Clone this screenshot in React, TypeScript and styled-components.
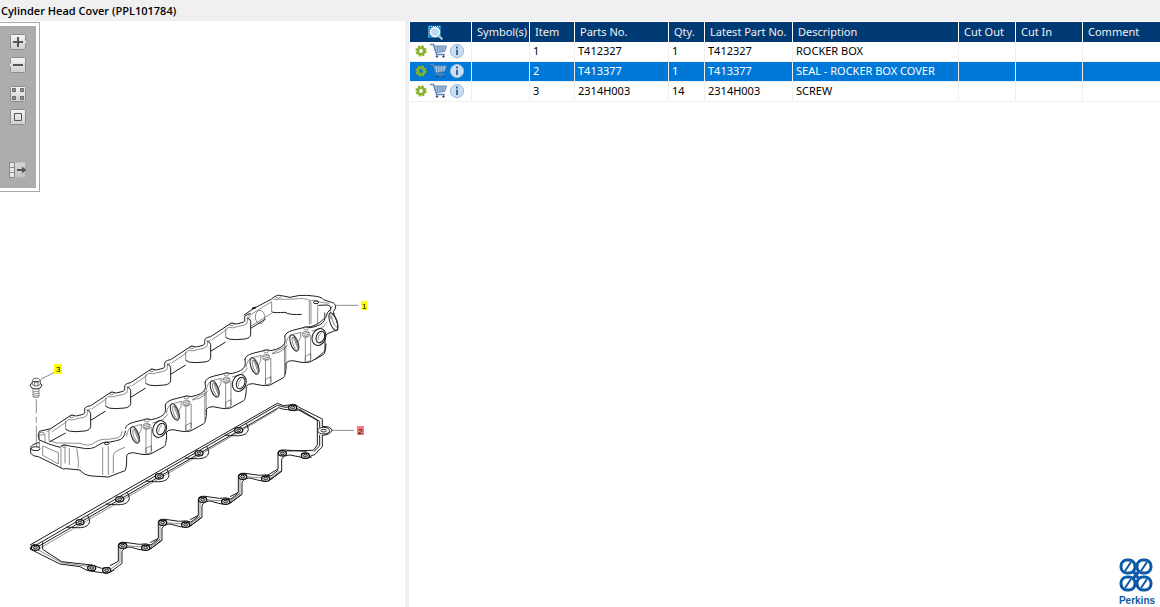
import React from 'react';
import styled, { createGlobalStyle } from 'styled-components';

const Global = createGlobalStyle`
  * { box-sizing: border-box; }
  body { margin: 0; background: #fff; color: #000; font: 11px/17px "Noto Sans", "Open Sans", sans-serif; }
`;

const Page = styled.div`
  min-height: 100vh;
  display: flex;
  flex-direction: column;
`;

const TitleBar = styled.header`
  background: #f0f0f0;
  padding: 1px 1px 0;
`;

const Title = styled.h1`
  margin: 0;
  font-size: 11px;
  line-height: 20px;
  font-weight: 600;
  font-family: "Open Sans", "Noto Sans", sans-serif;
`;

const Main = styled.main`
  flex: 1;
  display: flex;
`;

const DrawingPane = styled.section`
  flex: 0 0 calc(35% - 1px);
  padding-top: 1px;
`;

const Splitter = styled.div`
  flex: none;
  width: 4px;
  background: #f0f0f0;
`;

const PartsPane = styled.section`
  flex: 1;
  min-width: 0;
  padding-left: 1px;
  display: flex;
  flex-direction: column;
  justify-content: space-between;
`;

const Toolbar = styled.div`
  width: 40px;
  padding: 3px 3px 3px 0;
  border: 1px solid #aaa;
  border-left: 0;
`;

const ToolList = styled.div`
  display: flex;
  flex-direction: column;
  align-items: center;
  gap: 5px;
  padding: 7px 0 9px;
  background: #acacac;
`;

const ToolButton = styled.button<{ $gap?: number }>`
  display: block;
  width: 20px;
  height: 18px;
  margin: ${(p) => p.$gap ?? 0}px 0 0;
  padding: 0;
  border: 0;
  background: none;
  svg { display: block; }
`;

const Drawing = styled.svg`
  display: block;
  width: 100%;
  height: auto;
  .thin { stroke: #555; stroke-width: 2; }
`;

const Table = styled.table`
  width: 100%;
  margin-top: 1px;
  border-collapse: separate;
  border-spacing: 0;
  table-layout: fixed;
`;

const Col = styled.col<{ $w?: number }>`
  width: ${(p) => (p.$w ? `${p.$w}px` : 'auto')};
`;

const HeadCell = styled.th`
  height: 20px;
  padding: 0 0 2px 5px;
  background: #003a74;
  color: #f0f0f0;
  font-weight: 400;
  text-align: left;
  white-space: nowrap;
  border-right: 1px solid #fff;
  &:last-child { border-right: 0; }
`;

const IconHeadCell = styled(HeadCell)`
  padding: 0 0 0 16px;
`;

const Row = styled.tr<{ $selected?: boolean }>`
  background: ${(p) => (p.$selected ? '#0078d7' : '#fff')};
  color: ${(p) => (p.$selected ? '#fff' : '#000')};
`;

const Cell = styled.td`
  height: 20px;
  padding: 0 0 2px 3px;
  white-space: nowrap;
  border-right: 1px solid #f0f0f0;
  border-bottom: 1px solid #f0f0f0;
  &:last-child { border-right: 0; }
`;

const ActionCell = styled(Cell)`
  padding: 0 0 1px 3px;
`;

const Actions = styled.div`
  display: flex;
  align-items: center;
  gap: 1px;
`;

const IconButton = styled.button`
  display: block;
  padding: 0;
  border: 0;
  background: none;
  svg { display: block; }
`;

const Brand = styled.div`
  align-self: flex-end;
  display: flex;
  flex-direction: column;
  align-items: center;
  padding-right: 4px;
  color: #0a5aa6;
  font: bold 10px/13px "Liberation Sans", Arial, sans-serif;
`;

const Gear = () => (
  <svg width="16" height="16" viewBox="0 0 16 16">
    <circle cx="8" cy="8" r="4.800" fill="none" stroke="#86b32d" strokeWidth="1.800" strokeDasharray="2.200 1.570" />
    <circle cx="8" cy="8" r="3.200" fill="none" stroke="#86b32d" strokeWidth="2.600" />
  </svg>
);

const Cart = () => (
  <svg width="18" height="16" viewBox="0 0 18 16" fill="none" stroke="#5e86b5">
    <path d="M0 1.500H3.500L6.500 11.500H15" strokeWidth="1.300" />
    <path d="M4 3H16.500L14.500 8.500L6 9.500Z" fill="#c6d8ed" />
    <path d="M4.500 5H16M5 7H15.500M7.500 3V9M10 3V9M12.500 3V9" strokeWidth=".7" />
    <circle cx="7" cy="13.500" r=".8" fill="#35506f" stroke="#35506f" />
    <circle cx="13.500" cy="13.500" r=".8" fill="#35506f" stroke="#35506f" />
  </svg>
);

const Info = () => (
  <svg width="16" height="16" viewBox="0 0 16 16">
    <circle cx="8" cy="8" r="6.600" fill="#c8def2" stroke="#9dbbdc" />
    <path d="M8 3.500V5.500M8 6.800V12" stroke="#376ba3" strokeWidth="2" />
  </svg>
);

const PageSearch = () => (
  <svg width="18" height="18" viewBox="0 0 18 18">
    <path d="M2 2.500H15V15H2Z" fill="#2380bf" />
    <path d="M3 3.500H15M3 5V14" stroke="#c9e4f6" strokeDasharray="1 1" />
    <circle cx="9" cy="9" r="4.500" fill="#b9dbf0" stroke="#f2f8fc" strokeWidth="1.500" />
    <path d="M12.500 12.500L16.500 16.500" stroke="#b5c9da" strokeWidth="2.200" />
  </svg>
);

const Plate = ({ children }: { children: React.ReactNode }) => (
  <svg width="20" height="18" viewBox="0 0 20 18">
    <defs>
      <linearGradient id="plate" x1="0" y1="0" x2="0" y2="1">
        <stop offset="0" stopColor="#f4f4f4" />
        <stop offset="1" stopColor="#cfcfcf" />
      </linearGradient>
    </defs>
    {children}
  </svg>
);

const Square = () => <rect x="2.500" y="1.500" width="15" height="15" rx="1" fill="url(#plate)" stroke="#8c8c8c" />;

const tools = [
  { label: 'Zoom in', art: <><Square /><path d="M17 6.500L19.500 9L17 11.500" fill="#e2e2e2" stroke="#888" strokeWidth=".8" /><path d="M5 9H15M10 4V14" stroke="#555" strokeWidth="2" /></> },
  { label: 'Zoom out', art: <><Square /><path d="M3 6.500L.5 9L3 11.500" fill="#e2e2e2" stroke="#888" strokeWidth=".8" /><path d="M5 9H15" stroke="#555" strokeWidth="2" /></> },
  { label: 'Show all', gap: 6, art: <><Square /><path d="M4.500 3.500h3v3h-3zM12.500 3.500h3v3h-3zM4.500 11.500h3v3h-3zM12.500 11.500h3v3h-3z" fill="#999" stroke="#666" /></> },
  { label: 'Fit to window', art: <><Square /><path d="M6.500 5.500h7v7h-7z" fill="none" stroke="#555" /></> },
  { label: 'Hide panel', gap: 30, art: <><path d="M6 1.500H17V16.500H6Z" fill="url(#plate)" opacity=".6" /><path d="M1.500 1.500h5v15h-5zM1.500 6.500h5M1.500 11.500h5" fill="#e6e6e6" stroke="#888" /><path d="M9 9H16" stroke="#555" strokeWidth="2" /><path d="M14 5.500L18.500 9L14 12.500Z" fill="#555" /></> },
];

const Bolt = ({ x, y }: { x: number; y: number }) => (
  <g transform={`translate(${x} ${y})`}>
    <ellipse rx="12" ry="8" fill="#fff" stroke="#111" strokeWidth="4" />
    <ellipse rx="6" ry="4" fill="#bbb" stroke="#222" strokeWidth="3" />
  </g>
);

const CoverBackUnit = ({ x, y }: { x: number; y: number }) => (
  <g transform={`translate(${x} ${y})`}>
    <path d="M-63 38L-10 3Q0 -7 14 0L34 -5Q42 -8 39 -16Q36 -28 57 -31" />
    <path d="M-18 40Q-10 47 10 47L40 45Q56 42 57 32V-8Q56 -16 45 -18M57 13L102 -15" />
    <path className="thin" d="M-60 48L-18 19L-10 10Q5 14 16 8L36 4Q50 0 47 -10Q45 -18 57 -22M-18 14V40" />
    <ellipse cy="1" rx="7" ry="4" className="thin" />
  </g>
);

const CoverFrontUnit = ({ x, y, port }: { x: number; y: number; port: boolean }) => (
  <g transform={`translate(${x} ${y})`}>
    <path d="M-64 25Q-62 12 -40 6L-12 -1Q0 -8 14 -2L30 -6Q57 -15 57 -32Q55 -50 57 -46" />
    <path d="M-60 115V105Q-56 97 -40 97L-14 102Q0 104 12 101L52 79Q58 76 60 46" />
    <path className="thin" d="M-60 48Q-58 22 -38 18L-14 12M-2 28V100M14 20V92M-2 84L14 76V96L-2 102ZM17 8L38 3Q56 -4 64 -20M-16 12V28Q-20 34 -22 40" />
    <ellipse cy="1" rx="7" ry="4" className="thin" />
    <ellipse cx="0" cy="18" rx="11" ry="9" className="thin" />
    <path className="thin" d="M-10 16L10 12M-8 22L10 17M-5 26L8 22" />
    <ellipse cx="-35" cy="44" rx="11" ry="26" transform="rotate(-20 -35 44)" />
    <ellipse cx="-32" cy="46" rx="7" ry="21" className="thin" transform="rotate(-20 -32 46)" />
    <path className="thin" d="M-38 26L-24 62M-34 28L-22 58" />
    {port ? (
      <>
        <ellipse cx="39" cy="26" rx="20" ry="26" transform="rotate(22 39 26)" />
        <ellipse cx="43" cy="26" rx="12" ry="18" transform="rotate(22 43 26)" />
        <path className="thin" d="M36 36Q34 24 46 13" />
      </>
    ) : (
      <path className="thin" d="M55 -22V70M18 6L54 -12M59 -18V52" />
    )}
  </g>
);

const GasketTopUnit = ({ x, y }: { x: number; y: number }) => (
  <g transform={`translate(${x} ${y})`}>
    <path d="M-42 14Q-10 17 2 16Q26 14 29 -2Q28 -14 22 -22" />
    <Bolt x={0} y={0} />
  </g>
);

const GasketBottomUnit = ({ x, y }: { x: number; y: number }) => (
  <g transform={`translate(${x} ${y})`}>
    <path d="M-38 60L-13 47V-2Q-10 -12 7 -10L50 -4Q72 -8 85 -2L107 -20" />
    <path d="M-38 80L-2 53V18Q2 5 22 4L52 12Q75 16 88 6L118 -17" />
    <path className="thin" d="M-36 70L-8 50V10L0 8M10 0L60 4M80 8L112 -18" />
    <Bolt x={0} y={0} />
    <Bolt x={69} y={6} />
  </g>
);

const Callout = styled.text`
  font: 8px "Liberation Sans", Arial, sans-serif;
`;

const CylinderCover = () => (
  <Drawing viewBox="0 192 405 415" role="img" aria-label="Exploded view of the cylinder head cover">
    <g fill="none" stroke="#1c1c1c" strokeWidth="3" strokeLinejoin="round">
      <g transform="scale(.33333)">
        {[0, 1, 2, 3, 4].map((i) => <CoverBackUnit key={i} x={215 + 120 * i} y={1248 - 69 * i} />)}
        {[0, 1, 2, 3, 4].map((i) => <CoverFrontUnit key={i} x={440 + 119.5 * i} y={1261 - 69 * i} port={i % 2 === 0} />)}
      </g>
      <g transform="translate(0 360) scale(.33333)">
        <path d="M152 206L118 214Q111 224 118 240Q150 255 180 262Q190 251 208 258L240 263Q275 272 295 255Q305 246 325 247L350 242Q375 238 376 212" />
        <path d="M118 248Q94 252 92 263V280Q100 290 115 290L180 322Q190 330 200 326L240 330Q250 345 275 348L325 351L375 332Q380 325 380 296" />
        <path d="M148 246L197 219" />
        <ellipse cx="107" cy="266" rx="13" ry="6" />
        <path className="thin" d="M140 216L152 208M135 222V245M147 212V242Q170 252 190 249L240 250Q268 262 285 247Q300 236 325 238L350 234Q364 232 366 214M118 222V262M183 264V322M195 262V310M208 265V315M230 265Q240 320 232 325M308 262V345M325 258V345M340 340V285Q342 275 360 268L375 262M128 258L175 278V312L128 286Z" />
        <ellipse cx="125" cy="221" rx="9" ry="4" className="thin" />
        <ellipse cx="192" cy="258" rx="7" ry="4" className="thin" />
        <ellipse cx="320" cy="250" rx="7" ry="4" />
        <path className="thin" d="M109 118V160M109 170V188M109 198V262M122 58L162 38" />
        <path className="thin" d="M99 84V110Q108 118 117 110V84M99 96L117 93M99 103L117 100M99 109L117 107" />
        <ellipse cx="108" cy="76" rx="17" ry="11" fill="#fff" />
        <path d="M97 62L102 55H115L121 61V72L115 78H103L97 73ZM97 63L104 66H114L121 62M104 66V77M114 66V77" fill="#fff" strokeWidth="2" />
      </g>
      <g transform="translate(190 280) scale(.33333)">
        <path d="M161 106L190 86L245 57Q260 42 275 47L300 52Q330 44 350 46L370 48Q395 50 400 59L425 67Q438 70 437 84L430 95Q432 105 440 120Q446 135 443 150L430 154Q410 160 405 168V210Q400 220 375 238" />
        <path d="M245 96Q255 99 285 97Q300 106 335 103M352 142Q380 138 400 118Q412 112 412 98L422 88Q424 78 414 75L385 76" />
        <ellipse cx="210" cy="111" rx="14" ry="20" className="thin" />
        <ellipse cx="430" cy="125" rx="10" ry="28" transform="rotate(-20 430 125)" />
        <ellipse cx="434" cy="122" rx="6" ry="20" className="thin" transform="rotate(-20 434 122)" />
        <path className="thin" d="M172 110L245 65V96M250 58Q290 58 315 57Q345 52 362 63M358 65V134M363 66V132M383 74V130M358 65Q370 56 388 66L418 70M180 140L245 100M427 78L420 95Q418 108 424 118M438 76H505" />
        <path d="M186 86L198 82" strokeWidth="6" />
        <ellipse cx="378" cy="67" rx="8" ry="4" />
        <ellipse cx="265" cy="50" rx="8" ry="4" className="thin" />
      </g>
      <g transform="translate(180 395) scale(.33333)">
        <path d="M-450 450L292 25Q310 36 330 30Q345 24 357 37L427 72V95Q450 92 456 106Q450 120 427 121V155L405 178L375 190" />
        <path d="M-438 462L296 38Q310 44 322 44Q345 50 356 45L412 76V150L400 166L320 168" />
        <path strokeWidth="3" d="M-440 455L292 31Q315 40 338 36L362 45L419 79V98M419 120V152L402 170" />
        <path className="thin" d="M-426 463L290 45M456 106H522" />
        <ellipse cx="431" cy="107" rx="18" ry="10" fill="#fff" />
        <ellipse cx="431" cy="107" rx="8" ry="4" />
        <Bolt x={338} y={38} />
      </g>
      <g transform="translate(20 480) scale(.33333)">
        <path d="M45 192Q30 200 30 207L60 222L120 252L180 260Q200 275 225 275L260 280L282 270M68 187V208L125 245L215 255L245 265L270 262" />
        <path className="thin" d="M55 210L125 248L195 258L215 258" />
        {[0, 1, 2, 3, 4].map((i) => <GasketTopUnit key={i} x={180 + 119 * i} y={127 - 69 * i} />)}
        <Bolt x={215} y={264} />
        <Bolt x={260} y={271} />
        <Bolt x={46} y={203} />
        {[0, 1, 2, 3].map((i) => <GasketBottomUnit key={i} x={308 + 120 * i} y={197 - 69 * i} />)}
        <path d="M735 -10L774 -33V-82Q777 -92 794 -90L860 -86M749 0L785 -27V-62Q790 -74 810 -75L845 -68L875 -68" />
        <Bolt x={787} y={-80} />
        <Bolt x={856} y={-73} />
      </g>
    </g>
    <rect x="361" y="301" width="6" height="9" fill="#ff0" />
    <rect x="54" y="364" width="8" height="10" fill="#ff0" />
    <rect x="357" y="426" width="7" height="9" fill="#f47c7c" />
    <Callout x="362" y="309">1</Callout>
    <Callout x="56" y="372">3</Callout>
    <Callout x="358" y="434">2</Callout>
  </Drawing>
);

const widths = [62, 58, 45, 94, 36, 88, 166, 57, 67, undefined];
const heads = ['Symbol(s)', 'Item', 'Parts No.', 'Qty.', 'Latest Part No.', 'Description', 'Cut Out', 'Cut In', 'Comment'];
const parts = [
  ['1', 'T412327', '1', 'T412327', 'ROCKER BOX'],
  ['2', 'T413377', '1', 'T413377', 'SEAL - ROCKER BOX COVER'],
  ['3', '2314H003', '14', '2314H003', 'SCREW'],
];

const rings = [[3, 2], [19, 2], [3, 19], [19, 19]];

export default function App() {
  return (
    <Page>
      <Global />
      <TitleBar><Title>Cylinder Head Cover (PPL101784)</Title></TitleBar>
      <Main>
        <DrawingPane>
          <Toolbar>
            <ToolList>
              {tools.map((t) => (
                <ToolButton key={t.label} aria-label={t.label} $gap={t.gap}><Plate>{t.art}</Plate></ToolButton>
              ))}
            </ToolList>
          </Toolbar>
          <CylinderCover />
        </DrawingPane>
        <Splitter />
        <PartsPane>
          <Table>
            <colgroup>{widths.map((w, i) => <Col key={i} $w={w} />)}</colgroup>
            <thead>
              <tr>
                <IconHeadCell><IconButton aria-label="Search parts"><PageSearch /></IconButton></IconHeadCell>
                {heads.map((h) => <HeadCell key={h}>{h}</HeadCell>)}
              </tr>
            </thead>
            <tbody>
              {parts.map((p, i) => (
                <Row key={p[0]} $selected={i === 1}>
                  <ActionCell>
                    <Actions>
                      <IconButton aria-label="Options"><Gear /></IconButton>
                      <IconButton aria-label="Add to cart"><Cart /></IconButton>
                      <IconButton aria-label="Information"><Info /></IconButton>
                    </Actions>
                  </ActionCell>
                  <Cell />
                  {p.map((v, j) => <Cell key={j}>{v}</Cell>)}
                  <Cell /><Cell /><Cell />
                </Row>
              ))}
            </tbody>
          </Table>
          <Brand>
            <svg width="38" height="36" viewBox="0 0 38 36" fill="none" stroke="#0a5aa6" strokeWidth="3">
              {rings.map(([x, y]) => (
                <g key={`${x}-${y}`}>
                  <rect x={x} y={y} width="14" height="13" rx="6" />
                  <path d={`M${x + 4} ${y + 11}L${x + 10} ${y + 2}`} strokeWidth="2" />
                </g>
              ))}
              <path d="M15 13L21 21M21 13L15 21" />
            </svg>
            Perkins
          </Brand>
        </PartsPane>
      </Main>
    </Page>
  );
}
